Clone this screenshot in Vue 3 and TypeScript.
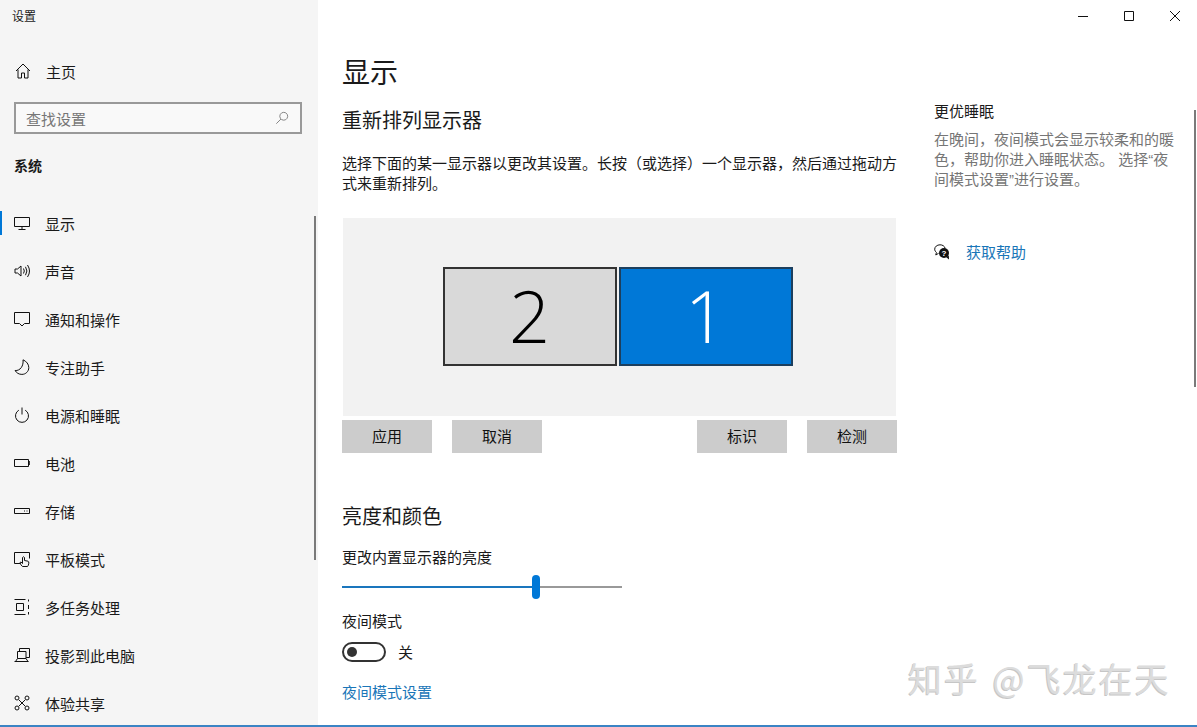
<script setup lang="ts">
interface NavItem {
  label: string
  icon: string
  active?: boolean
}

const navItems: NavItem[] = [
  { label: '显示', active: true, icon: 'M.5 2.5h15v9H.5zM8 11.5v3M4.5 14.5h7' },
  { label: '声音', icon: 'M1 6v4h2.5L7 13V3L3.5 6zM9.5 5.5q1.6 2.5 0 5M11.5 3.8q2.8 4.2 0 8.4M13.5 2q4 6 0 12' },
  { label: '通知和操作', icon: 'M.5 1.5h15v11h-5L8 15l-2.5-2.5h-5z' },
  { label: '专注助手', icon: 'M9 .8c3.500 1.400 5.800 4.500 5.800 7.800 0 3.800-3.100 6.800-6.900 6.800-3 0-5.500-1.500-6.800-3.900 5 .5 8.700-4.500 7.900-10.700z' },
  { label: '电源和睡眠', icon: 'M8 .5v7M4.800 3.200a6.500 6.500 0 1 0 6.400 0' },
  { label: '电池', icon: 'M.5 4.500h14v7H.5zM14.500 6.500h1.200v3h-1.200' },
  { label: '存储', icon: 'M.5 5.500h15v5H.5zM10 8h1M12.500 8h1' },
  { label: '平板模式', icon: 'M6 12.500H.5v-11h15v6M8.500 15.500q-2-1.500-2.500-4l1-.5 1.500 1.500V6.500q1-1.500 2 0v3l3.500.7q1 .3.800 2-.2 2.300-1.300 3.300z' },
  { label: '多任务处理', icon: 'M.5.500h11M.5 15.500h11M2.500 4.500h7v7h-7zM14.500.500v2M14.500 6v4M14.500 13v2.500' },
  { label: '投影到此电脑', icon: 'M5.500 4V1.500h10v9H12M3.500 4.500h8.500v7H3.500zM.5 14.500h14M1.500 14.500l2-3M14 14.500l-2-3' },
  { label: '体验共享', icon: 'M5 5l6 6M11 5l-6 6M5 3a2 2 0 1 1-4 0a2 2 0 0 1 4 0zM15 3a2 2 0 1 1-4 0a2 2 0 0 1 4 0zM5 13a2 2 0 1 1-4 0a2 2 0 0 1 4 0zM15 13a2 2 0 1 1-4 0a2 2 0 0 1 4 0z' }
]

const brightness = 194
</script>

<template>
  <div class="window">
    <aside class="sidebar">
      <div class="app-title">设置</div>
      <div class="home">
        <svg class="icon" viewBox="0 0 16 16"><path d="M1 8l7-7 7 7M3 6.500v8.500h3.500v-5h3v5H13V6.500" /></svg>
        <span>主页</span>
      </div>
      <div class="search">
        <span>查找设置</span>
        <svg class="search-icon" viewBox="0 0 16 16"><path d="M10 1.500a4.500 4.500 0 1 1-.01 0zM6.800 9.200L1.500 14.500" /></svg>
      </div>
      <div class="group">系统</div>
      <nav class="nav">
        <div v-for="item in navItems" :key="item.label" class="nav-item" :class="{ active: item.active }">
          <svg class="icon" viewBox="0 0 16 16"><path :d="item.icon" /></svg>
          <span>{{ item.label }}</span>
        </div>
      </nav>
      <div class="side-scroll"></div>
    </aside>

    <main class="content">
      <section class="main">
        <h1>显示</h1>
        <h2>重新排列显示器</h2>
        <p class="intro">选择下面的某一显示器以更改其设置。长按（或选择）一个显示器，然后通过拖动方式来重新排列。</p>
        <div class="stage">
          <div class="monitor">2</div>
          <div class="monitor selected">1</div>
        </div>
        <div class="actions">
          <div class="action-group">
            <button class="btn">应用</button>
            <button class="btn">取消</button>
          </div>
          <div class="action-group">
            <button class="btn">标识</button>
            <button class="btn">检测</button>
          </div>
        </div>
        <h2 class="second">亮度和颜色</h2>
        <div class="label bright-label">更改内置显示器的亮度</div>
        <div class="slider">
          <div class="slider-fill" :style="{ width: brightness + 'px' }"></div>
          <div class="slider-thumb" :style="{ left: brightness - 4 + 'px' }"></div>
        </div>
        <div class="label night-label">夜间模式</div>
        <div class="toggle-row">
          <div class="toggle"><div class="knob"></div></div>
          <span>关</span>
        </div>
        <a class="link night-link">夜间模式设置</a>
      </section>

      <section class="tips">
        <div class="tips-title">更优睡眠</div>
        <p>在晚间，夜间模式会显示较柔和的暖色，帮助你进入睡眠状态。 选择“夜间模式设置”进行设置。</p>
        <div class="help">
          <svg class="help-icon" viewBox="0 0 16 16">
            <path class="bubble" d="M6 .8C3 .8 .7 2.800 .7 5.200c0 1.300.7 2.400 1.700 3.200L1.800 11l2.800-1.700" />
            <path class="bubble" d="M6 .8c2.500 0 4.500 1.300 5 3.200" />
            <circle cx="10" cy="9" r="5" fill="#111" />
            <path d="M12 13l3 2.500-.2-4z" fill="#111" />
            <text x="10" y="11.800" text-anchor="middle" class="q">?</text>
          </svg>
          <a class="link">获取帮助</a>
        </div>
      </section>

      <div class="controls">
        <svg viewBox="0 0 12 12"><path d="M1 6.500h10" /></svg>
        <svg viewBox="0 0 12 12"><path d="M1.500 1.500h9v9h-9z" /></svg>
        <svg viewBox="0 0 12 12"><path d="M1 1l10 10M11 1L1 11" /></svg>
      </div>
      <div class="main-scroll"></div>
      <div class="watermark">知乎 @飞龙在天</div>
    </main>
  </div>
</template>

<style>
html, body { margin: 0; background: #fff; }
</style>

<style scoped>
.window {
  width: 1197px;
  height: 727px;
  display: flex;
  overflow: hidden;
  box-sizing: border-box;
  border-bottom: 2px solid #3b84c4;
  font-family: "Noto Sans CJK SC", "Liberation Sans", sans-serif;
  font-size: 15px;
  color: #1a1a1a;
  background: #fff;
}
.sidebar {
  position: relative;
  flex: 0 0 318px;
  background: #f5f5f5;
}
.app-title {
  padding: 6px 0 0 12px;
  font-size: 12px;
  line-height: 20px;
}
.icon {
  flex: 0 0 16px;
  width: 16px;
  height: 16px;
  fill: none;
  stroke: #111;
  stroke-width: 1;
}
.home {
  display: flex;
  align-items: center;
  gap: 15px;
  height: 30px;
  margin-top: 30px;
  padding-left: 15px;
  font-size: 15px;
}
.search {
  display: flex;
  align-items: center;
  justify-content: space-between;
  box-sizing: border-box;
  width: 288px;
  height: 32px;
  margin: 16px 0 0 14px;
  padding: 0 11px 0 10px;
  border: 2px solid #999;
  background: #f9f9f9;
  color: #767676;
}
.search-icon {
  width: 14px;
  height: 14px;
  fill: none;
  stroke: #777;
  stroke-width: 1;
}
.group {
  margin: 20px 0 0 14px;
  font-size: 14px;
  font-weight: 700;
  line-height: 22px;
}
.nav { margin-top: 23px; }
.nav-item {
  position: relative;
  display: flex;
  align-items: center;
  gap: 15px;
  height: 48px;
  padding-left: 14px;
}
.nav-item.active::before {
  content: "";
  position: absolute;
  left: 0;
  top: 12px;
  width: 2px;
  height: 24px;
  background: #0078d7;
}
.side-scroll {
  position: absolute;
  left: 314px;
  top: 216px;
  width: 2px;
  height: 344px;
  background: #7a7a7a;
}
.content {
  position: relative;
  flex: 1;
  display: flex;
  padding-left: 24px;
}
.main {
  flex: 0 0 555px;
  width: 555px;
}
h1 {
  margin: 51px 0 0;
  font-size: 28px;
  font-weight: 400;
  line-height: 40px;
}
h2 {
  margin: 15px 0 0;
  font-size: 20px;
  font-weight: 400;
  line-height: 28px;
}
.intro {
  margin: 19px 0 0;
  line-height: 20px;
}
.stage {
  display: flex;
  justify-content: center;
  align-items: center;
  gap: 2px;
  box-sizing: border-box;
  height: 198px;
  margin: 25px 0 0 1px;
  width: 553px;
  padding: 0 4px 2px 0;
  background: #f2f2f2;
}
.monitor {
  display: flex;
  align-items: center;
  justify-content: center;
  box-sizing: border-box;
  width: 174px;
  height: 99px;
  padding-bottom: 2px;
  border: 2px solid #333;
  background: #d9d9d9;
  color: #000;
  font-family: "Open Sans", "Liberation Sans", sans-serif;
  font-size: 72px;
  font-weight: 300;
  line-height: 1;
}
.monitor.selected {
  border-color: #1c3f5e;
  background: #0078d7;
  color: #fff;
}
.actions {
  display: flex;
  justify-content: space-between;
  margin-top: 4px;
}
.action-group {
  display: flex;
  gap: 20px;
}
.btn {
  width: 90px;
  height: 33px;
  padding: 0 0 2px;
  border: 0;
  background: #ccc;
  color: #111;
  font: inherit;
}
.second { margin-top: 49px; }
.label { line-height: 20px; }
.bright-label { margin-top: 17px; }
.slider {
  position: relative;
  width: 280px;
  height: 2px;
  margin-top: 19px;
  background: #999;
}
.slider-fill {
  height: 100%;
  background: #1a76bd;
}
.slider-thumb {
  position: absolute;
  top: -11px;
  width: 8px;
  height: 24px;
  border-radius: 4px;
  background: #0078d7;
}
.night-label { margin-top: 23px; }
.toggle-row {
  display: flex;
  align-items: center;
  gap: 12px;
  margin-top: 11px;
  line-height: 20px;
}
.toggle {
  display: flex;
  align-items: center;
  box-sizing: border-box;
  width: 44px;
  height: 20px;
  padding-left: 3px;
  border: 2px solid #333;
  border-radius: 10px;
}
.knob {
  width: 10px;
  height: 10px;
  border-radius: 50%;
  background: #333;
}
.link {
  color: #1a76b8;
  line-height: 20px;
}
.night-link {
  display: block;
  margin-top: 20px;
}
.tips {
  flex: 0 0 240px;
  margin-left: 37px;
}
.tips-title {
  margin-top: 101px;
  line-height: 20px;
}
.tips p {
  margin: 9px 0 0;
  line-height: 20px;
  color: #767676;
  font-family: "Liberation Sans", "Noto Sans CJK SC", sans-serif;
}
.help {
  display: flex;
  align-items: center;
  gap: 16px;
  margin-top: 52px;
}
.help-icon {
  flex: 0 0 16px;
  width: 16px;
  height: 16px;
  fill: none;
  stroke: none;
}
.bubble { stroke: #111; stroke-width: 1; }
.q {
  fill: #fff;
  font-size: 8px;
  font-weight: 700;
  font-family: "Liberation Sans", sans-serif;
}
.controls {
  position: absolute;
  top: 10px;
  right: 16px;
  display: flex;
  gap: 34px;
}
.controls svg {
  width: 12px;
  height: 12px;
  fill: none;
  stroke: #111;
  stroke-width: 1;
}
.main-scroll {
  position: absolute;
  right: 1px;
  top: 110px;
  width: 2px;
  height: 277px;
  background: #7a7a7a;
}
.watermark {
  position: absolute;
  left: 590px;
  top: 653px;
  font-size: 34px;
  line-height: 50px;
  letter-spacing: 2px;
  word-spacing: 3px;
  white-space: nowrap;
  color: #dcdcdc;
  text-shadow: -1px 1px 0 #c6c6c6;
}
</style>
